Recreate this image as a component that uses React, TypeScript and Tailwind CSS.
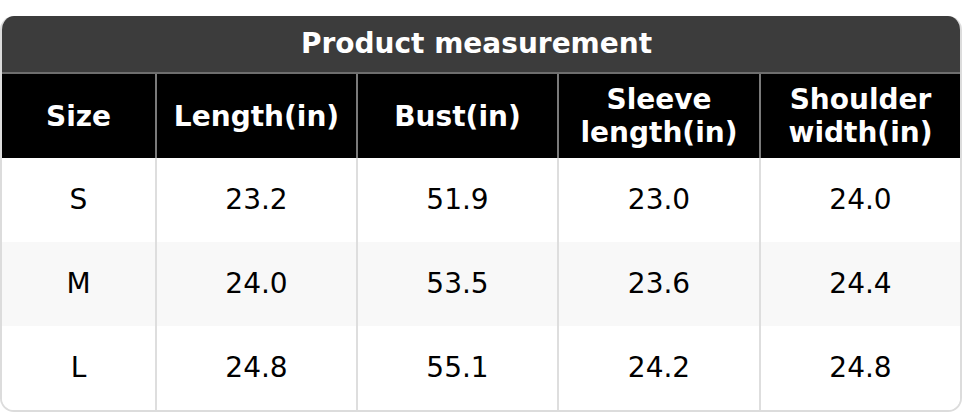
import React from "react";

const headers = ["Size", "Length(in)", "Bust(in)", "Sleeve length(in)", "Shoulder width(in)"];
const rows = [
  ["S", "23.2", "51.9", "23.0", "24.0"],
  ["M", "24.0", "53.5", "23.6", "24.4"],
  ["L", "24.8", "55.1", "24.2", "24.8"],
];

export default function App() {
  return (
    <div className="w-[962px] h-[412px] bg-white pt-4" style={{ fontFamily: '"DejaVu Sans", sans-serif' }}>
      <div className="rounded-[14px] overflow-hidden border-x-2 border-b-2 border-[#dcdcdc] h-[396px] flex flex-col">
        <div className="h-[58px] shrink-0 bg-[#3c3c3c] text-white font-bold text-[28px] flex items-center justify-center pr-[9px] border-b-2 border-[#6e6e6e]">
          Product measurement
        </div>
        <div className="grid grid-cols-[153px_201px_201px_202px_1fr] h-[84px] shrink-0 bg-black text-white font-bold text-[28px] leading-[33px]">
          {headers.map((h, i) => (
            <div
              key={h}
              className={`flex items-center justify-center text-center px-2 ${i > 0 ? "border-l-2 border-[#7a7a7a]" : ""}`}
            >
              {h}
            </div>
          ))}
        </div>
        {rows.map((r, ri) => (
          <div
            key={r[0]}
            className={`grid grid-cols-[153px_201px_201px_202px_1fr] h-[84px] shrink-0 text-[28px] text-black ${ri === 1 ? "bg-[#f8f8f8]" : "bg-white"}`}
          >
            {r.map((c, i) => (
              <div
                key={i}
                className={`flex items-center justify-center ${i > 0 ? "border-l-2 border-[#dedede]" : ""}`}
              >
                {c}
              </div>
            ))}
          </div>
        ))}
      </div>
    </div>
  );
}
